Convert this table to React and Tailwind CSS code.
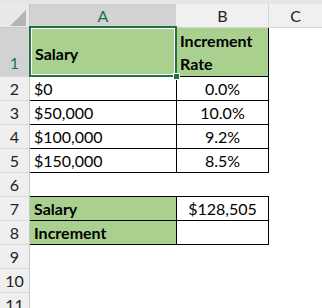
import React from "react";

const FONT = { fontFamily: "Lato, 'Liberation Sans', sans-serif" };

function RowHead({ n, selected, h = "h-[24px]", bottom = false }) {
  return (
    <div
      className={`w-[30px] shrink-0 ${h} border-r border-b border-r-[#c8c8c8] border-b-[#d8d8d8] flex justify-center ${
        bottom ? "items-end pb-[1px]" : "items-center"
      } text-[16px] ${selected ? "bg-[#d2d2d2] text-[#217346]" : "bg-[#efefef] text-[#222]"}`}
    >
      {n}
    </div>
  );
}

function Row({ n, a, b, aClass = "", bClass = "" }) {
  return (
    <div className="flex h-[24px]">
      <RowHead n={n} />
      <div className={`w-[147px] shrink-0 h-full flex items-center pl-[4px] text-[16px] ${aClass}`}>{a}</div>
      <div className={`w-[92px] shrink-0 h-full flex items-center justify-center text-[16px] ${bClass}`}>{b}</div>
      <div className="flex-1 h-full" />
    </div>
  );
}

export default function App() {
  const tb = "border-r border-b border-black";
  return (
    <div className="w-[322px] h-[308px] overflow-hidden bg-white text-black" style={FONT}>
      <div className="h-[4px] bg-[#e6e6e6]" />
      {/* Column header */}
      <div className="flex h-[24px]">
        <div className="w-[30px] shrink-0 h-full bg-[#e9e9e9] border-r border-b border-[#c8c8c8] relative">
          <svg className="absolute left-[10px] top-[6px]" width="16" height="16" viewBox="0 0 16 16">
            <polygon points="16,0 16,16 0,16" fill="#b4b4b4" />
          </svg>
        </div>
        <div className="w-[147px] shrink-0 h-full bg-[#d2d2d2] border-r border-[#f4f4f4] flex items-center justify-center text-[16px] text-[#217346]">
          A
        </div>
        <div className="w-[92px] shrink-0 h-full bg-[#f0f0f0] border-r border-b border-[#d4d4d4] flex items-center justify-center text-[16px] text-[#222]">
          B
        </div>
        <div className="flex-1 h-full bg-[#f0f0f0] border-b border-[#d4d4d4] flex items-center justify-center text-[16px] text-[#222]">
          C
        </div>
      </div>
      {/* Row 1 */}
      <div className="flex h-[49px]">
        <RowHead n="1" selected h="h-[49px]" bottom />
        <div className="w-[147px] shrink-0 h-full relative bg-[#a9d08e] border-b border-r border-black flex items-center pl-[5px] pt-[4px] text-[16px] font-bold">
          Salary
          <div className="absolute -left-[1px] -top-[2px] -right-[1px] -bottom-[1px] border-2 border-[#217346] shadow-[inset_0_0_0_1px_#ffffff]" />
          <div className="absolute -right-[4px] -bottom-[4px] w-[7px] h-[7px] bg-[#217346] border border-white" />
        </div>
        <div className="w-[92px] shrink-0 h-full bg-[#a9d08e] border-b border-r border-black flex flex-col justify-center pl-[3px] text-[16px] font-bold leading-[23px]">
          <span>Increment</span>
          <span>Rate</span>
        </div>
        <div className="flex-1 h-full" />
      </div>
      <Row n="2" a="$0" b="0.0%" aClass={tb} bClass={tb} />
      <Row n="3" a="$50,000" b="10.0%" aClass={tb} bClass={tb} />
      <Row n="4" a="$100,000" b="9.2%" aClass={tb} bClass={tb} />
      <Row n="5" a="$150,000" b="8.5%" aClass={tb} bClass={tb} />
      <Row n="6" a="" b="" aClass="border-b border-black" bClass="border-b border-black" />
      <Row n="7" a={<span className="font-bold">Salary</span>} b="$128,505" aClass={`${tb} bg-[#a9d08e]`} bClass={tb} />
      <Row n="8" a={<span className="font-bold">Increment</span>} b="" aClass={`${tb} bg-[#a9d08e]`} bClass={tb} />
      <Row n="9" />
      <Row n="10" />
      <Row n="11" />
    </div>
  );
}
